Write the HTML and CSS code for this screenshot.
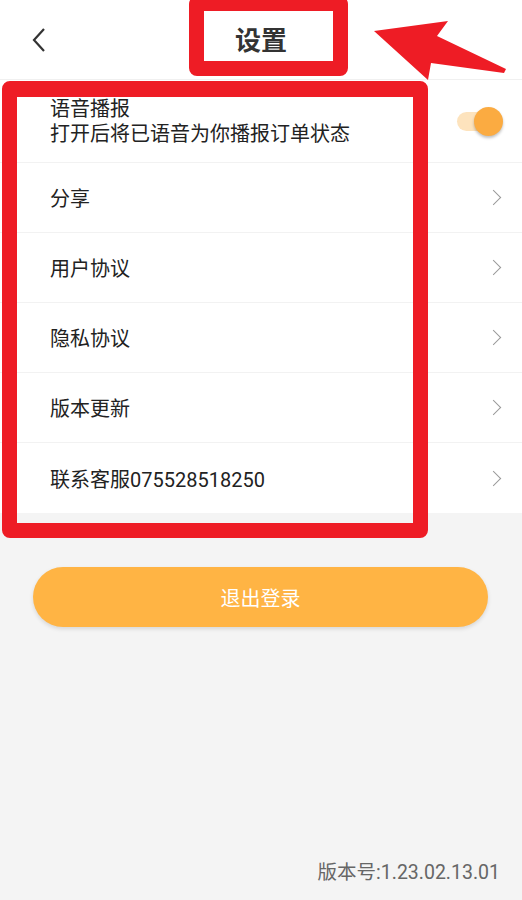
FILE: index.html
```html
<!DOCTYPE html>
<html lang="zh-CN">
<head>
    <meta charset="UTF-8">
    <meta name="viewport" content="width=device-width, initial-scale=1.0">
    <title>设置</title>
    <link rel="stylesheet" href="styles.css">
</head>
<body>
    <div class="page">
        <div class="topbar">
            <span class="back">
                <svg width="16" height="26" viewBox="0 0 16 26"><path d="M13 2 L3 13 L13 24" fill="none" stroke="#333" stroke-width="2.2"/></svg>
            </span>
            <h1>设置</h1>
        </div>
        <div class="list">
            <div class="row row-voice">
                <div class="text">
                    <p>语音播报</p>
                    <p>打开后将已语音为你播报订单状态</p>
                </div>
                <span class="switch"><span class="thumb"></span></span>
            </div>
            <div class="row"><span>分享</span><span class="arrow"></span></div>
            <div class="row"><span>用户协议</span><span class="arrow"></span></div>
            <div class="row"><span>隐私协议</span><span class="arrow"></span></div>
            <div class="row"><span>版本更新</span><span class="arrow"></span></div>
            <div class="row"><span>联系客服075528518250</span><span class="arrow"></span></div>
        </div>
        <div class="logout">退出登录</div>
        <div class="version">版本号:1.23.02.13.01</div>

        <!-- 标注 -->
        <div class="mark mark-title"></div>
        <div class="mark mark-list"></div>
        <svg class="mark-arrow" width="522" height="90" viewBox="0 0 522 90">
            <polygon points="374,31 448,21 437,36 506,69 504,73 431,63 428,80" fill="#ee1c25"/>
        </svg>
    </div>
</body>
</html>
```

FILE: styles.css
```css
body {
    margin: 0;
    padding: 0;
    background: #f4f4f4;
    font-family: Roboto, "Noto Sans CJK SC", sans-serif;
    color: #222;
}
.page {
    position: relative;
    width: 522px;
    height: 900px;
    display: flex;
    flex-direction: column;
    overflow: hidden;
}
.topbar {
    height: 80px;
    background: #fff;
    display: flex;
    align-items: center;
    justify-content: center;
    position: relative;
    border-bottom: 1px solid #f0f0f0;
    box-sizing: border-box;
}
.topbar h1 {
    margin: 0;
    font-size: 26px;
    font-weight: bold;
    color: #333;
    line-height: 1;
    margin-top: 2px;
}
.back {
    position: absolute;
    left: 31px;
    top: 27px;
    display: flex;
}
.list {
    background: #fff;
}
.row {
    height: 70px;
    padding: 0 19px 0 50px;
    display: flex;
    align-items: center;
    justify-content: space-between;
    border-bottom: 1px solid #f2f2f2;
    font-size: 20px;
    box-sizing: border-box;
}
.row:last-child {
    border-bottom: none;
}
.row-voice {
    height: 83px;
    padding-right: 20px;
}
.row-voice .text {
    margin-top: 2px;
}
.row-voice p {
    margin: 0;
    line-height: 25px;
}
.switch {
    position: relative;
    width: 38px;
    height: 19px;
    border-radius: 10px;
    background: #fde3bd;
    margin-right: 7px;
}
.switch .thumb {
    position: absolute;
    right: -8px;
    top: -5px;
    width: 29px;
    height: 29px;
    border-radius: 50%;
    background: #fbab41;
    box-shadow: 0 2px 3px rgba(0, 0, 0, 0.25);
}
.arrow {
    width: 10px;
    height: 10px;
    border-top: 1.6px solid #999;
    border-right: 1.6px solid #999;
    transform: rotate(45deg);
    margin-right: 4px;
}
.logout {
    margin: 54px 34px 0 33px;
    height: 60px;
    border-radius: 30px;
    background: #ffb444;
    color: #fff;
    font-size: 20px;
    display: flex;
    align-items: center;
    justify-content: center;
    box-shadow: 0 2px 4px rgba(0, 0, 0, 0.12);
}
.version {
    margin-top: auto;
    text-align: right;
    padding: 0 22px 15px 0;
    font-size: 19.5px;
    color: #666;
}
.mark {
    position: absolute;
    border: 15px solid #ee1c25;
    border-radius: 8px;
    box-sizing: border-box;
}
.mark-title {
    left: 189px;
    top: -4px;
    width: 159px;
    height: 80px;
}
.mark-list {
    left: 2px;
    top: 81px;
    width: 426px;
    height: 457px;
    border-top-width: 16px;
}
.mark-arrow {
    position: absolute;
    left: 0;
    top: 0;
}
```
